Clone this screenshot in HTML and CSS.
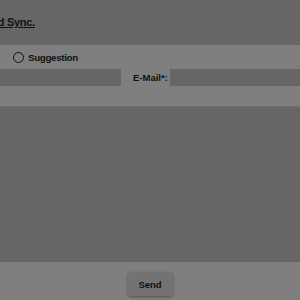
FILE: index.html
```html
<!DOCTYPE html>
<html>
<head>
<meta charset="utf-8">
<link rel="stylesheet" href="styles.css">
</head>
<body>
<div class="page">
  <div class="header">
    <a class="title" href="#">Download Sync.</a>
  </div>
  <div class="band">
    <div class="radio-row">
      <label class="radio"><span class="circle"></span><span class="radio-text">Suggestion</span></label>
    </div>
    <div class="field-row">
      <div class="input left"></div>
      <span class="label">E-Mail*:</span>
      <div class="input right"></div>
    </div>
  </div>
  <div class="textarea"></div>
  <div class="footer">
    <button class="send">Send</button>
  </div>
</div>
</body>
</html>
```

FILE: styles.css
```css
html, body {
  margin: 0;
  padding: 0;
  width: 300px;
  height: 300px;
  overflow: hidden;
  background: #7f7f7f;
  font-family: "Liberation Sans", Arial, sans-serif;
  color: #111111;
}
.page {
  display: flex;
  flex-direction: column;
  width: 300px;
  height: 300px;
}
.header {
  height: 45px;
  background: #666666;
  overflow: hidden;
  display: flex;
  align-items: flex-start;
}
.title {
  margin-top: 16px;
  margin-left: -46px;
  font-size: 11px;
  font-weight: bold;
  letter-spacing: -0.3px;
  color: #111111;
  text-decoration: underline;
  white-space: nowrap;
}
.band {
  height: 61px;
  background: #7f7f7f;
  display: flex;
  flex-direction: column;
}
.radio-row {
  padding: 7px 0 0 13px;
  height: 17px;
}
.radio {
  display: flex;
  align-items: center;
  gap: 4px;
}
.circle {
  width: 9px;
  height: 9px;
  border: 1px solid #111111;
  border-radius: 50%;
}
.radio-text {
  font-size: 9.8px;
  font-weight: bold;
  letter-spacing: -0.35px;
}
.field-row {
  display: flex;
  align-items: center;
  height: 17px;
}
.input {
  height: 17px;
  background: #666666;
}
.input.left {
  width: 121px;
}
.label {
  font-size: 9.5px;
  font-weight: bold;
  margin-left: 12px;
  width: 37px;
}
.input.right {
  flex: 1;
}
.textarea {
  height: 155px;
  background: #666666;
  border-top: 1px solid #6e6e6e;
}
.footer {
  flex: 1;
  display: flex;
  justify-content: center;
  align-items: flex-start;
  padding-top: 10px;
}
.send {
  width: 45px;
  height: 24px;
  border: none;
  border-radius: 3px;
  background: #737373;
  box-shadow: 0 1px 3px rgba(0,0,0,0.35);
  font-family: "Liberation Sans", Arial, sans-serif;
  font-size: 9.5px;
  font-weight: bold;
  color: #111111;
  padding: 0;
}
```
